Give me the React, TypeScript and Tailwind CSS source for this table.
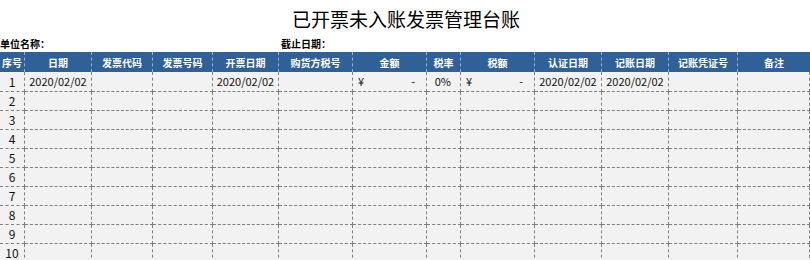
import React from "react";

const cols = "grid-cols-[25px_67px_61px_60px_66px_74px_74px_34px_74px_67px_67px_69px_72px]";
const headers = ["序号", "日期", "发票代码", "发票号码", "开票日期", "购货方税号", "金额", "税率", "税额", "认证日期", "记账日期", "记账凭证号", "备注"];

function Row({ n, first }: { n: number; first?: boolean }) {
  const cell = "border-r border-b border-dashed border-[#7f7f7f] flex items-center overflow-hidden whitespace-nowrap";
  return (
    <div className={`grid ${cols} ${first ? "h-[20px]" : "h-[19px]"} bg-[#f2f2f2] text-[11px] text-[#111]`}>
      <div className={`${cell} justify-center text-[12px]`}>{n}</div>
      <div className={`${cell} justify-center`}>{first ? "2020/02/02" : ""}</div>
      <div className={cell}></div>
      <div className={cell}></div>
      <div className={`${cell} justify-center`}>{first ? "2020/02/02" : ""}</div>
      <div className={cell}></div>
      <div className={`${cell} justify-between pl-[5px] pr-[11px]`}>
        {first ? (<><span>¥</span><span>-</span></>) : null}
      </div>
      <div className={`${cell} justify-end pr-[9px]`}>{first ? "0%" : ""}</div>
      <div className={`${cell} justify-between pl-[5px] pr-[11px]`}>
        {first ? (<><span>¥</span><span>-</span></>) : null}
      </div>
      <div className={`${cell} justify-center`}>{first ? "2020/02/02" : ""}</div>
      <div className={`${cell} justify-center`}>{first ? "2020/02/02" : ""}</div>
      <div className={cell}></div>
      <div className={cell}></div>
    </div>
  );
}

export default function App() {
  const rows = Array.from({ length: 10 }, (_, i) => i + 1);
  return (
    <div
      className="w-[810px] h-[260px] overflow-hidden bg-white"
      style={{ fontFamily: '"Noto Sans CJK SC", "Noto Sans", sans-serif' }}
    >
      <div className="h-[36px] flex items-center justify-center pl-[2px] text-[19px] text-black leading-none">
        已开票未入账发票管理台账
      </div>
      <div className="h-[16px] flex items-center text-[10px] font-semibold text-black leading-none">
        <div className="w-[281px]">单位名称：</div>
        <div>截止日期：</div>
      </div>
      <div className={`grid ${cols} h-[20px] bg-[#2f6097] text-white text-[10px] font-bold`}>
        {headers.map((h, i) => (
          <div
            key={h}
            className={`flex items-center justify-center whitespace-nowrap ${i < headers.length - 1 ? "border-r border-dashed border-[#9db3cf]" : ""}`}
          >
            {h}
          </div>
        ))}
      </div>
      {rows.map((n) => (
        <Row key={n} n={n} first={n === 1} />
      ))}
    </div>
  );
}
